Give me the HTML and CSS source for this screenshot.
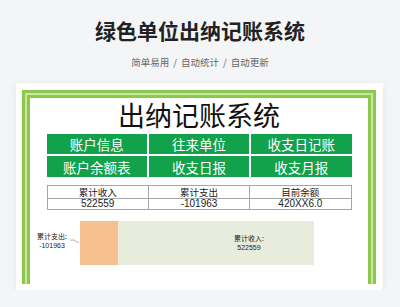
FILE: index.html
```html
<!DOCTYPE html>
<html lang="zh-CN">

<head>
    <meta charset="UTF-8">
    <meta name="viewport" content="width=device-width, initial-scale=1.0">
    <title>绿色单位出纳记账系统</title>
    <link rel="stylesheet" href="styles.css">
</head>

<body>

    <!-- 顶部标题 -->
    <div class="page-head">
        <h1>绿色单位出纳记账系统</h1>
        <p class="tags">简单易用<span class="sep">/</span>自动统计<span class="sep">/</span>自动更新</p>
    </div>

    <div class="card">
        <div class="frame">
            <div class="sheet">
                <h2>出纳记账系统</h2>

                <div class="menu">
                    <button>账户信息</button>
                    <button>往来单位</button>
                    <button>收支日记账</button>
                    <button>账户余额表</button>
                    <button>收支日报</button>
                    <button>收支月报</button>
                </div>

                <table class="summary">
                    <tr>
                        <th>累计收入</th>
                        <th>累计支出</th>
                        <th>目前余额</th>
                    </tr>
                    <tr>
                        <td>522559</td>
                        <td>-101963</td>
                        <td>420XX6.0</td>
                    </tr>
                </table>

                <!-- 收支图表 -->
                <div class="chart">
                    <div class="chart-label">累计支出:<br><span class="num">-101963</span></div>
                    <svg class="leader" width="10" height="8" viewBox="0 0 10 8">
                        <polyline points="0,1 4,1 9,4" fill="none" stroke="#9a9a9a" stroke-width="0.8" />
                    </svg>
                    <div class="bar-out"></div>
                    <div class="bar-in">
                        <div class="chart-label">累计收入:<br><span class="num">522559</span></div>
                    </div>
                </div>
            </div>
        </div>
    </div>

</body>

</html>
```

FILE: styles.css
```css
body {
    margin: 0;
    background-color: #f4f5f7;
    font-family: "Noto Sans CJK SC", "Noto Sans", sans-serif;
    color: #222;
}

.page-head {
    text-align: center;
    padding-top: 15px;
}

    .page-head h1 {
        margin: 0;
        font-size: 21px;
        line-height: 30px;
        font-weight: bold;
        color: #222;
    }

    .page-head .tags {
        margin: 10px 0 0;
        font-size: 9.5px;
        line-height: 14px;
        color: #666;
    }

    .page-head .sep {
        margin: 0 4px;
    }

.card {
    margin: 14px 17px 0 16px;
    height: 207px;
    padding: 7px 7px 6px 6px;
    box-sizing: border-box;
    background-color: #fff;
    box-shadow: 0 2px 8px rgba(0, 0, 0, 0.07);
    display: flex;
    flex-direction: column;
}

/* 表格外框 */
.frame {
    flex: 1;
    display: flex;
    border: 3px solid #8cc84a;
    border-bottom: 0;
    padding: 2px 2px 0;
    background-color: #c8e6a2;
}

.sheet {
    flex: 1;
    border: 3px solid #8cc84a;
    border-bottom: 0;
    background-color: #fff;
    display: flex;
    flex-direction: column;
    align-items: center;
}

    .sheet h2 {
        margin: 2px 0 0;
        font-size: 27px;
        line-height: 30px;
        font-weight: normal;
        color: #111;
    }

.menu {
    margin-top: 4px;
    width: 305px;
    display: grid;
    grid-template-columns: repeat(3, 1fr);
    grid-template-rows: 20px 21px;
    gap: 2px;
}

    .menu button {
        border: none;
        padding: 0;
        background-color: #12a24b;
        color: #fff;
        font-family: inherit;
        font-size: 13.5px;
        line-height: 20px;
    }

.summary {
    margin-top: 8px;
    width: 305px;
    border-collapse: collapse;
    table-layout: fixed;
}

    .summary th,
    .summary td {
        border: 1px solid #a6a6a6;
        padding: 0;
        text-align: center;
        font-weight: normal;
    }

    .summary th {
        height: 12px;
        font-size: 9.5px;
        line-height: 12px;
    }

    .summary td {
        height: 10px;
        font-family: "Liberation Sans", sans-serif;
        font-size: 10px;
        line-height: 10px;
    }

.num {
    font-family: "Liberation Sans", sans-serif;
}

.chart {
    margin-top: 11px;
    align-self: stretch;
    padding-left: 5px;
    height: 44px;
    display: flex;
    align-items: center;
}

    .chart-label {
        font-size: 7px;
        line-height: 9px;
        text-align: center;
        color: #222;
    }

    .chart > .chart-label {
        margin-bottom: 5px;
        width: 34px;
    }

.leader {
    margin: 0 0 0 1px;
}

.bar-out {
    width: 38px;
    height: 44px;
    background-color: #f6c18f;
}

.bar-in {
    width: 196px;
    height: 44px;
    background-color: #e8ecdc;
    display: flex;
    align-items: center;
    padding-left: 116px;
    box-sizing: border-box;
}
```
